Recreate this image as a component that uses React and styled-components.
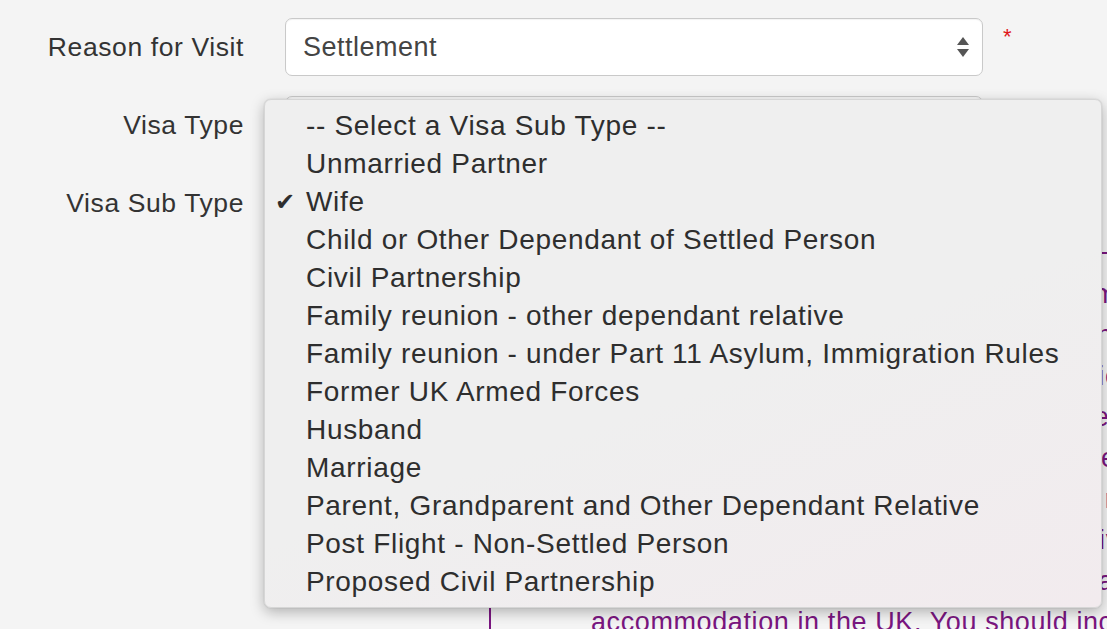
import React from 'react';
import styled, { createGlobalStyle } from 'styled-components';

const GlobalStyle = createGlobalStyle`
  html, body {
    margin: 0;
    padding: 0;
    background: #f4f4f4;
    overflow: hidden;
  }
  body {
    font-family: "Liberation Sans", Arial, Helvetica, sans-serif;
    color: #333;
  }
`;

const Page = styled.div`
  position: relative;
  width: 1107px;
  height: 629px;
  overflow: hidden;
  font-family: "Liberation Sans", Arial, Helvetica, sans-serif;
`;

const Form = styled.div`
  display: flex;
  flex-direction: column;
  padding-top: 18px;
`;

const Row = styled.div`
  display: flex;
  align-items: center;
  height: ${p => p.h}px;
`;

const Label = styled.div`
  width: 244px;
  text-align: right;
  font-size: 26.5px;
  letter-spacing: 0.6px;
  color: #333;
  flex-shrink: 0;
`;

const Select = styled.div`
  box-sizing: border-box;
  margin-left: 41px;
  width: 698px;
  height: 58px;
  background: #fff;
  border: 1px solid #c9c9c9;
  border-radius: 7px;
  box-shadow: inset 0 1px 1px rgba(0, 0, 0, 0.05);
  display: flex;
  align-items: center;
  justify-content: space-between;
  padding: 0 12px 0 17px;
  font-size: 27px;
  letter-spacing: 0.5px;
  color: #444;
`;

const Arrows = styled.svg`
  width: 14px;
  height: 26px;
`;

const Required = styled.span`
  color: #e0161b;
  font-size: 22px;
  align-self: flex-start;
  margin: 6px 0 0 20px;
`;

const Notice = styled.div`
  position: absolute;
  left: 489px;
  top: 252px;
  width: 700px;
  height: 420px;
  border-left: 2px solid #7a1680;
  border-top: 2px solid #7a1680;
  color: #7a1680;
  font-size: 27px;
  letter-spacing: 0.6px;
`;

const NoticeText = styled.div`
  padding: 20px 0 0 100px;
  line-height: 41px;
  white-space: nowrap;
`;

const Menu = styled.ul`
  position: absolute;
  left: 264px;
  top: 99px;
  width: 838px;
  height: 509px;
  box-sizing: border-box;
  margin: 0;
  padding: 7px 0 0;
  list-style: none;
  border-radius: 7px;
  border: 1px solid #d6d6d6;
  background: linear-gradient(160deg, #efefef 0%, #efefef 55%, #f2ebee 100%);
  box-shadow: 0 4px 14px rgba(0, 0, 0, 0.28), 0 0 1px rgba(0, 0, 0, 0.3);
`;

const Option = styled.li`
  position: relative;
  height: 38px;
  line-height: 38px;
  padding-left: 41px;
  font-size: 28px;
  letter-spacing: 0.68px;
  color: #2e2e2e;
  white-space: nowrap;
`;

const Check = styled.span`
  position: absolute;
  left: 10px;
  top: 0;
  font-size: 24px;
  letter-spacing: 0;
  color: #2e2e2e;
`;

const options = [
  '-- Select a Visa Sub Type --',
  'Unmarried Partner',
  'Wife',
  'Child or Other Dependant of Settled Person',
  'Civil Partnership',
  'Family reunion - other dependant relative',
  'Family reunion - under Part 11 Asylum, Immigration Rules',
  'Former UK Armed Forces',
  'Husband',
  'Marriage',
  'Parent, Grandparent and Other Dependant Relative',
  'Post Flight - Non-Settled Person',
  'Proposed Civil Partnership',
];

export default function App() {
  return (
    <Page>
      <GlobalStyle />
      <Form>
        <Row h={58}>
          <Label>Reason for Visit</Label>
          <Select>
            <span>Settlement</span>
            <Arrows viewBox="0 0 14 26">
              <path d="M7 3 L13 11 L1 11 Z" fill="#555" />
              <path d="M1 15 L13 15 L7 23 Z" fill="#555" />
            </Arrows>
          </Select>
          <Required>*</Required>
        </Row>
        <Row h={20} />
        <Row h={58}>
          <Label>Visa Type</Label>
          <Select />
        </Row>
        <Row h={20} />
        <Row h={58}>
          <Label>Visa Sub Type</Label>
        </Row>
      </Form>

      <Notice>
        <NoticeText>
          If you are applying to join a partner or family member in the UK For<br />
          settlement you must meet the requirements set out in the Immigration<br />
          Rules and provide evidence of your relationship to the sponsor you<br />
          are joining and that you can be maintained without public funds -<br />
          and have adequate accommodation in the UK. You must also provide -<br />
          proof of your sponsor's status and of the money available to them, a<br />
          with documents showing where you will live and who owns the house in<br />
          which you will stay. Please read the guidance before you continue a<br />
          accommodation in the UK. You should include details of the property
        </NoticeText>
      </Notice>

      <Menu>
        {options.map(o => (
          <Option key={o}>
            {o === 'Wife' && <Check>✔</Check>}
            {o}
          </Option>
        ))}
      </Menu>
    </Page>
  );
}
